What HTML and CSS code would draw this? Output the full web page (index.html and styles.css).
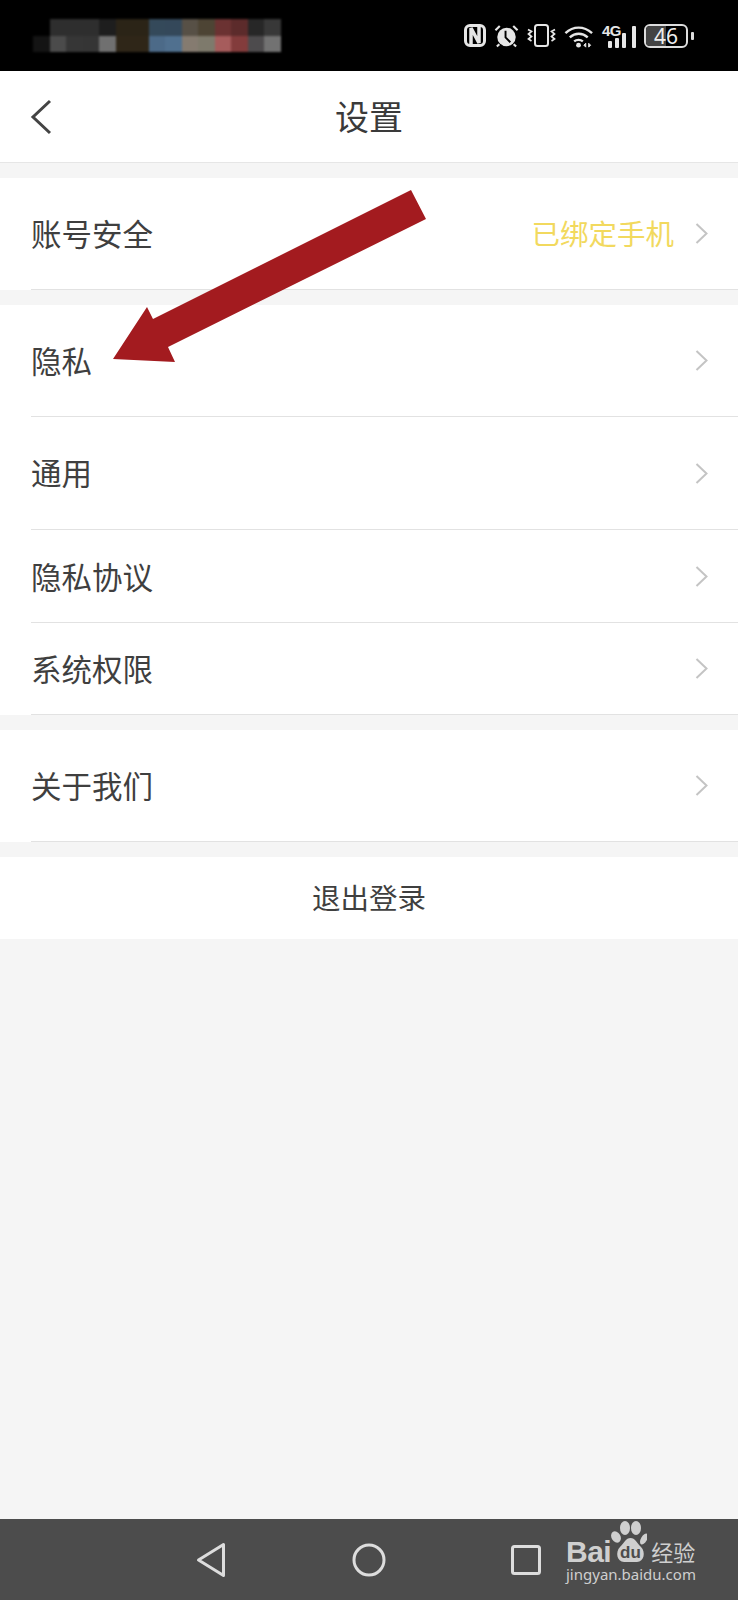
FILE: index.html
```html
<!DOCTYPE html>
<html lang="zh-CN">
<head>
    <meta charset="UTF-8">
    <meta name="viewport" content="width=device-width, initial-scale=1.0">
    <title>设置</title>
    <link rel="stylesheet" href="styles.css">
</head>
<body>
    <div class="page">
        <!-- Status bar -->
        <div class="status-bar">
            <div class="mosaic">
                <i style="background:#000"></i><i style="background:#2e2e2e"></i><i style="background:#2e2e2e"></i><i style="background:#2e2e2e"></i><i style="background:#1e1e1e"></i><i style="background:#2b2417"></i><i style="background:#2b2417"></i><i style="background:#34495a"></i><i style="background:#34485a"></i><i style="background:#575046"></i><i style="background:#4d4434"></i><i style="background:#6b3232"></i><i style="background:#5c2b2b"></i><i style="background:#272727"></i><i style="background:#383838"></i>
                <i style="background:#141414"></i><i style="background:#4b4b4b"></i><i style="background:#363636"></i><i style="background:#353535"></i><i style="background:#707070"></i><i style="background:#2f2618"></i><i style="background:#2f2618"></i><i style="background:#4c6a88"></i><i style="background:#50708f"></i><i style="background:#857b70"></i><i style="background:#7e7a6c"></i><i style="background:#a65c5c"></i><i style="background:#833c3c"></i><i style="background:#4d4b4d"></i><i style="background:#727272"></i>
            </div>
            <div class="status-icons">
                <svg width="22" height="23" viewBox="0 0 22 23" fill="none" stroke="#e6e6e6">
                    <rect x="1.500" y="1.500" width="19" height="20" rx="4.500" stroke-width="3"/>
                    <path d="M7 20V4L15 19V3" stroke-width="3.500" stroke-linejoin="bevel"/>
                </svg>
                <svg width="25" height="24" viewBox="0 0 26 24" fill="none" stroke="#e6e6e6">
                    <circle cx="13" cy="13" r="9.600" fill="#e6e6e6" stroke="none"/>
                    <path d="M12 6.500V13.500L17 18.500" stroke="#000" stroke-width="2"/>
                    <path d="M1.500 6L6 1.500M24.500 6L20 1.500M5.500 20.500L3 23M20.500 20.500L23 23" stroke-width="2.200"/>
                </svg>
                <svg width="29" height="23" viewBox="0 0 29 23" fill="none" stroke="#e6e6e6">
                    <rect x="8" y="1" width="13" height="21" rx="2.500" stroke-width="2"/>
                    <path d="M1 5.500L4.500 7.500L1.500 10L4.500 12.500L1.500 15L4.500 17M28 5.500L24.500 7.500L27.500 10L24.500 12.500L27.500 15L24.500 17" stroke-width="1.700"/>
                </svg>
                <svg width="30" height="24" viewBox="0 0 31 24" fill="none" stroke="#e6e6e6" stroke-width="2.500">
                    <path d="M1.500 9C9.500 1.500 20.500 1.500 29 9M6 13.500C11.500 8.500 19 8.500 24.500 13.500M10.500 17.500C13 15.500 17 15.500 19.500 17.500"/>
                    <circle cx="15" cy="21.500" r="2.500" fill="#e6e6e6" stroke="none"/>
                    <path d="M22.500 19.500L20.500 21.500L22.500 23.500ZM25.500 19.500L27.500 21.500L25.500 23.500Z" fill="#e6e6e6" stroke-width="1"/>
                </svg>
                <div class="signal">
                    <span class="signal-label">4G</span>
                    <div class="signal-bars"><i class="bar-1"></i><i class="bar-2"></i><i class="bar-3"></i><i class="bar-4"></i></div>
                </div>
                <div class="battery">
                    <div class="battery-body"><span class="battery-fill"></span><span class="battery-num">46</span></div>
                    <span class="battery-tip"></span>
                </div>
            </div>
        </div>

        <!-- Title bar -->
        <div class="title-bar">
            <svg class="back" width="22" height="36" viewBox="0 0 22 36" fill="none" stroke="#444" stroke-width="3">
                <path d="M20 2L3 18L20 34"/>
            </svg>
            <h1>设置</h1>
        </div>

        <div class="group">
            <div class="row row-a">
                <span class="label">账号安全</span>
                <span class="value">已绑定手机</span>
                <svg class="chevron" width="13" height="21" viewBox="0 0 13 21" fill="none" stroke="#c4c4c4" stroke-width="2"><path d="M1.500 1L11.500 10.500L1.500 20"/></svg>
            </div>
        </div>

        <div class="group">
            <div class="row row-a">
                <span class="label">隐私</span>
                <svg class="chevron" width="13" height="21" viewBox="0 0 13 21" fill="none" stroke="#c4c4c4" stroke-width="2"><path d="M1.500 1L11.500 10.500L1.500 20"/></svg>
            </div>
            <div class="row row-c">
                <span class="label">通用</span>
                <svg class="chevron" width="13" height="21" viewBox="0 0 13 21" fill="none" stroke="#c4c4c4" stroke-width="2"><path d="M1.500 1L11.500 10.500L1.500 20"/></svg>
            </div>
            <div class="row row-d">
                <span class="label">隐私协议</span>
                <svg class="chevron" width="13" height="21" viewBox="0 0 13 21" fill="none" stroke="#c4c4c4" stroke-width="2"><path d="M1.500 1L11.500 10.500L1.500 20"/></svg>
            </div>
            <div class="row row-b">
                <span class="label">系统权限</span>
                <svg class="chevron" width="13" height="21" viewBox="0 0 13 21" fill="none" stroke="#c4c4c4" stroke-width="2"><path d="M1.500 1L11.500 10.500L1.500 20"/></svg>
            </div>
        </div>

        <div class="group">
            <div class="row row-a">
                <span class="label">关于我们</span>
                <svg class="chevron" width="13" height="21" viewBox="0 0 13 21" fill="none" stroke="#c4c4c4" stroke-width="2"><path d="M1.500 1L11.500 10.500L1.500 20"/></svg>
            </div>
        </div>

        <div class="logout">退出登录</div>

        <div class="spacer"></div>

        <!-- Navigation bar -->
        <div class="nav-bar">
            <svg width="30" height="36" viewBox="0 0 30 36" fill="none" stroke="#ddd" stroke-width="3" stroke-linejoin="round"><path d="M27.500 2.500V33.500L2.500 18Z"/></svg>
            <svg width="34" height="34" viewBox="0 0 34 34" fill="none" stroke="#ddd" stroke-width="3"><circle cx="17" cy="17" r="15"/></svg>
            <svg width="30" height="30" viewBox="0 0 30 30" fill="none" stroke="#ddd" stroke-width="3" stroke-linejoin="round"><rect x="1.500" y="1.500" width="27" height="27" rx="2"/></svg>
        </div>

        <!-- Red arrow drawn on top of the screenshot -->
        <svg class="arrow" width="738" height="400" viewBox="0 0 738 400">
            <path d="M411 190L426 219L168 347L175 362L113 359L147 307L153 319Z" fill="#a31b1f"/>
        </svg>

        <!-- Watermark -->
        <div class="watermark">
            <div class="wm-top">
                <span class="wm-bai">Bai</span>
                <svg class="wm-paw" width="36" height="43" viewBox="0 0 36 43">
                    <g fill="#cfcfcf">
                        <ellipse cx="5" cy="17" rx="4.500" ry="6" transform="rotate(-30 5 17)"/>
                        <ellipse cx="14" cy="8" rx="5" ry="7"/>
                        <ellipse cx="25" cy="8" rx="5" ry="7"/>
                        <ellipse cx="33" cy="19" rx="3" ry="6" transform="rotate(30 33 19)"/>
                        <path d="M19.500 18C24 18 26 23 30 27C35 32 33 42 26 42L13 42C6 42 4 32 9 27C13 23 15 18 19.500 18Z"/>
                    </g>
                    <text x="19.500" y="38" text-anchor="middle" class="wm-du">du</text>
                </svg>
                <span class="wm-cn">经验</span>
            </div>
            <div class="wm-url">jingyan.baidu.com</div>
        </div>
    </div>
</body>
</html>
```

FILE: styles.css
```css
* {
    box-sizing: border-box;
}

body {
    margin: 0;
    padding: 0;
    font-family: "Noto Sans CJK SC", "Noto Sans", sans-serif;
    background-color: #f5f5f5;
}

.page {
    position: relative;
    display: flex;
    flex-direction: column;
    width: 738px;
    height: 1600px;
    overflow: hidden;
    background-color: #f5f5f5;
}

/* Status bar */
.status-bar {
    display: flex;
    justify-content: space-between;
    align-items: center;
    height: 71px;
    padding: 0 44px 0 33px;
    background-color: #000;
}

.mosaic {
    display: grid;
    grid-template-columns: repeat(15, 16.500px);
    grid-auto-rows: 16.500px;
    filter: blur(1px);
}

.status-icons {
    display: flex;
    align-items: center;
    gap: 8px;
}

.signal {
    position: relative;
    width: 34px;
    height: 24px;
}

.signal-label {
    position: absolute;
    top: 0;
    left: 0;
    font-family: "Liberation Sans", sans-serif;
    font-size: 15px;
    font-weight: bold;
    line-height: 13px;
    letter-spacing: -0.500px;
    color: #e6e6e6;
}

.signal-bars {
    position: absolute;
    right: 0;
    bottom: 0;
    display: flex;
    align-items: flex-end;
    gap: 3px;
}

.signal-bars i {
    display: block;
    width: 4px;
    background-color: #e6e6e6;
    border-radius: 1px;
}

.bar-1 { height: 7px; }
.bar-2 { height: 10px; }
.bar-3 { height: 15px; }
.bar-4 { height: 22px; margin-left: 3px; }

.battery {
    display: flex;
    align-items: center;
    gap: 3px;
}

.battery-body {
    position: relative;
    display: flex;
    align-items: center;
    justify-content: center;
    width: 44px;
    height: 24px;
    border: 2px solid #ddd;
    border-radius: 6px;
}

.battery-fill {
    position: absolute;
    top: 0;
    bottom: 0;
    left: 0;
    width: 50%;
    background-color: #444;
    border-radius: 4px 0 0 4px;
}

.battery-num {
    position: relative;
    font-family: "Noto Sans", sans-serif;
    font-size: 21px;
    line-height: 20px;
    color: #eee;
}

.battery-tip {
    width: 3px;
    height: 8px;
    background-color: #ddd;
    border-radius: 1px;
}

/* Title bar */
.title-bar {
    position: relative;
    display: flex;
    align-items: center;
    justify-content: center;
    height: 92px;
    background-color: #fff;
    border-bottom: 1px solid #e6e6e6;
}

.title-bar h1 {
    margin: 0 0 2px;
    font-size: 34px;
    font-weight: normal;
    color: #3a3a3a;
}

.back {
    position: absolute;
    top: 28px;
    left: 30px;
}

/* List */
.group {
    margin-top: 15px;
    padding-left: 31px;
    background-color: #fff;
}

.row {
    display: flex;
    align-items: center;
    padding-right: 30px;
    border-bottom: 1px solid #e2e2e2;
}

.row-a {
    height: 112px;
}

.row-b {
    height: 92px;
}

.row-c {
    height: 113px;
}

.row-d {
    height: 93px;
}

.label {
    flex: 1;
    margin-bottom: 2px;
    font-size: 30.500px;
    color: #3f3f3f;
}

.row-d .label {
    margin-bottom: 0;
}

.value {
    margin-right: 21px;
    margin-bottom: 2px;
    font-size: 28.500px;
    color: #f2d95e;
}

.logout {
    margin-top: 15px;
    height: 82px;
    line-height: 80px;
    text-align: center;
    font-size: 28.500px;
    color: #3f3f3f;
    background-color: #fff;
}

.spacer {
    flex: 1;
}

/* Navigation bar */
.nav-bar {
    display: flex;
    align-items: center;
    gap: 126px;
    height: 81px;
    padding-left: 196px;
    background-color: #4c4c4c;
}

.nav-bar svg:last-child {
    margin-left: -1px;
}

/* Overlays */
.arrow {
    position: absolute;
    top: 0;
    left: 0;
}

.watermark {
    position: absolute;
    top: 1520px;
    left: 566px;
    color: #cfcfcf;
}

.wm-top {
    display: flex;
    align-items: flex-end;
    height: 44px;
}

.wm-bai {
    font-family: "Liberation Sans", sans-serif;
    font-size: 30px;
    font-weight: bold;
    line-height: 24px;
    letter-spacing: -0.500px;
}

.wm-paw {
    margin-bottom: 1px;
}

.wm-du {
    font-family: "Liberation Sans", sans-serif;
    font-size: 17px;
    font-weight: bold;
    fill: #4c4c4c;
}

.wm-cn {
    margin-left: 4px;
    font-size: 22px;
    line-height: 26px;
}

.wm-url {
    font-family: "Noto Sans", sans-serif;
    font-size: 15px;
    line-height: 20px;
}
```
